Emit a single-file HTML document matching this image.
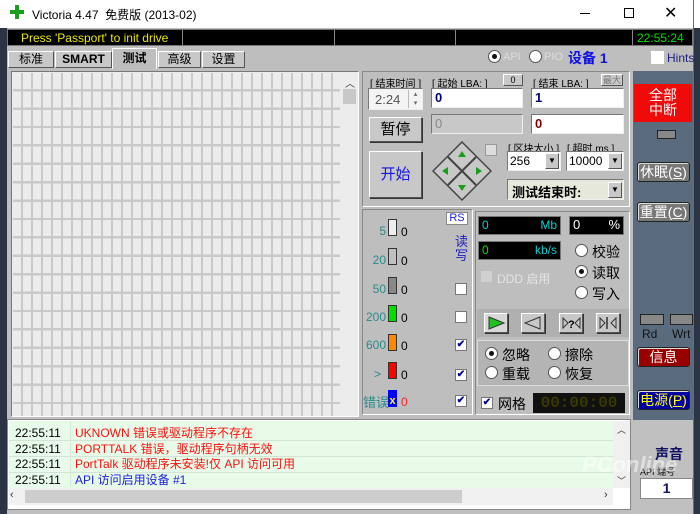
<!DOCTYPE html>
<html><head><meta charset="utf-8"><style>
*{box-sizing:border-box;margin:0;padding:0}
body{width:700px;height:514px;overflow:hidden;position:relative;background:#2b3442;font-family:"Liberation Sans","Noto Sans CJK SC",sans-serif;font-size:12px}
.a{position:absolute}
.bt{background:#c8c8c8;border:1px solid #555;border-top-color:#fff;border-left-color:#fff;box-shadow:1px 1px 0 #333}
.in{background:#fff;border:1px solid #777;border-right-color:#eee;border-bottom-color:#eee}
.lbl{color:#000;font-size:10px}
.rad{position:absolute;width:13px;height:13px;border-radius:50%;background:#fff;border:1px solid #555}
.rad.on::after{content:"";position:absolute;left:3px;top:3px;width:5px;height:5px;border-radius:50%;background:#111}
.cb{position:absolute;width:12px;height:12px;background:#fff;border:1px solid #777;font-size:10px;line-height:10px;text-align:center;color:#00008b;font-weight:bold}
.rbtn{position:absolute;left:637px;width:53px;height:20px;border:1px solid #222;border-radius:3px;color:#fff;font-size:14px;text-align:center;line-height:18px;box-shadow:inset 1px 1px 0 #ddd}
.tab{position:absolute;top:51px;height:17px;background:#c8c8c8;border:1px solid #555;border-top-color:#fff;border-left-color:#fff;font-size:12px;line-height:15px;text-align:center;white-space:nowrap;overflow:hidden}
</style></head><body>
<div class="a" style="left:0;top:0;width:700px;height:28px;background:#fff"></div>
<div class="a" style="left:15px;top:5px;width:4px;height:14px;background:#1a9e1a"></div>
<div class="a" style="left:10px;top:10px;width:14px;height:4px;background:#1a9e1a"></div>
<div class="a" style="left:32px;top:6px;font-size:12px;color:#000">Victoria 4.47&nbsp; 免费版 (2013-02)</div>
<div class="a" style="left:580px;top:13px;width:10px;height:1px;background:#000"></div>
<div class="a" style="left:624px;top:8px;width:10px;height:10px;border:1px solid #000"></div>
<div class="a" style="left:664px;top:3px;font-size:16px;color:#000">✕</div>
<div class="a" style="left:693px;top:0;width:1px;height:514px;background:#1e7fd6"></div>
<div class="a" style="left:7px;top:28px;width:686px;height:486px;background:#bebebe"></div>
<div class="a" style="left:7px;top:29px;width:686px;height:17px;background:#000;border:1px solid #777"></div>
<div class="a" style="left:182px;top:30px;width:1px;height:15px;background:#888"></div>
<div class="a" style="left:334px;top:30px;width:1px;height:15px;background:#888"></div>
<div class="a" style="left:455px;top:30px;width:1px;height:15px;background:#888"></div>
<div class="a" style="left:632px;top:30px;width:1px;height:15px;background:#888"></div>
<div class="a" style="left:21px;top:31px;color:#e8e800;font-size:12px">Press 'Passport' to init drive</div>
<div class="a" style="left:637px;top:31px;color:#00e000;font-size:12px">22:55:24</div>
<div class="tab" style="left:8px;width:46px">标准</div>
<div class="tab" style="left:55px;width:57px;font-weight:bold">SMART</div>
<div class="a" style="left:112px;top:48px;width:45px;height:21px;background:#bebebe;border:1px solid #fff;border-bottom:none;font-weight:bold;text-align:center;line-height:18px">测试</div>
<div class="tab" style="left:158px;width:43px">高级</div>
<div class="tab" style="left:202px;width:43px">设置</div>
<div class="rad on" style="left:488px;top:50px"></div>
<div class="a" style="left:503px;top:51px;color:#ddd;font-size:11px">API</div>
<div class="rad" style="left:529px;top:50px"></div>
<div class="a" style="left:544px;top:51px;color:#ddd;font-size:11px">PIO</div>
<div class="a" style="left:568px;top:48px;color:#1010e0;font-size:14px;font-weight:bold">设备 1</div>
<div class="a" style="left:651px;top:51px;width:13px;height:13px;background:#fff"></div>
<div class="a" style="left:667px;top:51px;color:#202080;font-size:12px">Hints</div>
<div class="a" style="left:11px;top:71px;width:348px;height:346px;border:1px solid #777;border-right-color:#fff;border-bottom-color:#fff;background:#ececec"></div>
<div class="a" style="left:13px;top:73px;width:327px;height:343px;background-color:#ececec;background-image:repeating-linear-gradient(90deg,transparent 0,transparent 8px,#c9c9c9 8px,#c9c9c9 10px),repeating-linear-gradient(180deg,transparent 0,transparent 16px,#c9c9c9 16px,#c9c9c9 18.4px)"></div>
<div class="a" style="left:341px;top:73px;width:17px;height:343px;background:#ececec"></div>
<div class="a" style="left:345px;top:75px;font-size:10px;color:#333">︿</div>
<div class="a" style="left:343px;top:89px;width:13px;height:15px;background:#c8c8c8"></div>
<div class="a" style="left:362px;top:71px;width:268px;height:136px;border:1px solid #888;border-right-color:#fff;border-bottom-color:#fff"></div>
<div class="a lbl" style="left:370px;top:75px">[ 结束时间 ]</div>
<div class="a lbl" style="left:432px;top:75px">[ 起始 LBA: ]</div>
<div class="a bt" style="left:503px;top:74px;width:20px;height:12px;font-size:9px;text-align:center;line-height:10px;box-shadow:none">0</div>
<div class="a lbl" style="left:533px;top:75px">[ 结束 LBA: ]</div>
<div class="a bt" style="left:601px;top:74px;width:22px;height:12px;font-size:9px;text-align:center;line-height:10px;box-shadow:none;color:#777">最大</div>
<div class="a in" style="left:368px;top:88px;width:55px;height:22px;background:#f4f4f4;color:#555;font-size:13px;padding:3px 6px">2:24</div>
<div class="a" style="left:408px;top:90px;width:14px;height:18px;border-left:1px solid #bbb;font-size:7px;color:#666;line-height:9px;text-align:center">▴<br>▾</div>
<div class="a in" style="left:431px;top:88px;width:92px;height:20px;color:#000080;font-weight:bold;font-size:13px;padding:1px 3px">0</div>
<div class="a in" style="left:531px;top:88px;width:93px;height:20px;color:#000080;font-weight:bold;font-size:13px;padding:1px 3px">1</div>
<div class="a bt" style="left:369px;top:117px;width:53px;height:25px;font-size:15px;text-align:center;line-height:23px">暂停</div>
<div class="a in" style="left:431px;top:114px;width:92px;height:20px;background:#c8c8c8;color:#888;font-size:13px;padding:1px 3px">0</div>
<div class="a in" style="left:531px;top:114px;width:93px;height:20px;color:#800000;font-weight:bold;font-size:13px;padding:1px 3px">0</div>
<div class="a bt" style="left:369px;top:151px;width:53px;height:47px;font-size:15px;text-align:center;line-height:45px;color:#1515e0">开始</div>
<svg class="a" style="left:432px;top:141px" width="60" height="60" viewBox="0 0 60 60">
<polygon points="30,1 59,30 30,59 1,30" fill="#c8c8c8" stroke="#444" stroke-width="1.5"/>
<line x1="16" y1="16" x2="44" y2="44" stroke="#444" stroke-width="2"/><line x1="44" y1="16" x2="16" y2="44" stroke="#444" stroke-width="2"/>
<polygon points="30,10 26,16 34,16" fill="#1a9e1a"/><polygon points="30,50 26,44 34,44" fill="#1a9e1a"/>
<polygon points="10,30 16,26 16,34" fill="#1a9e1a"/><polygon points="50,30 44,26 44,34" fill="#1a9e1a"/></svg>
<div class="a" style="left:485px;top:144px;width:12px;height:12px;background:#ddd;border:1px solid #999"></div>
<div class="a lbl" style="left:508px;top:140px">[ 区块大小 ]</div>
<div class="a lbl" style="left:567px;top:140px">[ 超时 ms ]</div>
<div class="a in" style="left:507px;top:151px;width:54px;height:20px;font-size:12px;padding:2px 2px">256</div>
<div class="a bt" style="left:545px;top:153px;width:14px;height:16px;box-shadow:none;font-size:8px;text-align:center;line-height:14px">▼</div>
<div class="a in" style="left:566px;top:151px;width:58px;height:20px;font-size:12px;padding:2px 2px">10000</div>
<div class="a bt" style="left:608px;top:153px;width:14px;height:16px;box-shadow:none;font-size:8px;text-align:center;line-height:14px">▼</div>
<div class="a in" style="left:507px;top:179px;width:117px;height:21px;background:#e6e8dc;font-size:13px;font-weight:bold;padding:2px 4px">测试结束时:</div>
<div class="a bt" style="left:608px;top:182px;width:14px;height:16px;box-shadow:none;font-size:8px;text-align:center;line-height:14px">▼</div>
<div class="a" style="left:362px;top:209px;width:111px;height:206px;border:1px solid #888;border-right-color:#fff;border-bottom-color:#fff"></div>
<div class="a" style="left:446px;top:212px;width:22px;height:13px;background:#fff;border:1px solid #888;color:#2020e0;font-size:11px;line-height:11px;text-align:center">RS</div>
<div class="a" style="left:455px;top:235px;width:14px;color:#2020c0;font-size:13px;line-height:14px">读写</div>
<div class="a" style="left:362px;top:224px;width:24px;text-align:right;color:#2a8a8a;font-size:12px">5</div>
<div class="a" style="left:362px;top:253px;width:24px;text-align:right;color:#2a8a8a;font-size:12px">20</div>
<div class="a" style="left:362px;top:282px;width:24px;text-align:right;color:#2a8a8a;font-size:12px">50</div>
<div class="a" style="left:362px;top:310px;width:24px;text-align:right;color:#2a8a8a;font-size:12px">200</div>
<div class="a" style="left:362px;top:338px;width:24px;text-align:right;color:#2a8a8a;font-size:12px">600</div>
<div class="a" style="left:362px;top:367px;width:19px;text-align:right;color:#2a8a8a;font-size:12px">&gt;</div>
<div class="a" style="left:363px;top:392px;color:#2a8a8a;font-size:13px">错误</div>
<div class="a" style="left:388px;top:219px;width:9px;height:17px;background:#eee;border:1px solid #333"></div>
<div class="a" style="left:388px;top:248px;width:9px;height:17px;background:#c0c0c0;border:1px solid #333"></div>
<div class="a" style="left:388px;top:277px;width:9px;height:17px;background:#888;border:1px solid #333"></div>
<div class="a" style="left:388px;top:305px;width:9px;height:17px;background:#00e000;border:1px solid #333"></div>
<div class="a" style="left:388px;top:334px;width:9px;height:17px;background:#ff8800;border:1px solid #333"></div>
<div class="a" style="left:388px;top:362px;width:9px;height:17px;background:#ff0000;border:1px solid #333"></div>
<div class="a" style="left:388px;top:390px;width:9px;height:17px;background:#0000ff;color:#ffff00;font-size:11px;font-weight:bold;line-height:22px;text-align:center">x</div>
<div class="a" style="left:401px;top:225px;font-size:12px">0</div>
<div class="a" style="left:401px;top:254px;font-size:12px">0</div>
<div class="a" style="left:401px;top:283px;font-size:12px">0</div>
<div class="a" style="left:401px;top:311px;font-size:12px">0</div>
<div class="a" style="left:401px;top:339px;font-size:12px">0</div>
<div class="a" style="left:401px;top:368px;font-size:12px">0</div>
<div class="a" style="left:401px;top:395px;font-size:12px;color:#ff2020">0</div>
<div class="cb" style="left:455px;top:283px"></div>
<div class="cb" style="left:455px;top:311px"></div>
<div class="cb" style="left:455px;top:339px">✔</div>
<div class="cb" style="left:455px;top:369px">✔</div>
<div class="cb" style="left:455px;top:395px">✔</div>
<div class="a" style="left:475px;top:211px;width:155px;height:204px;border:1px solid #888;border-right-color:#fff;border-bottom-color:#fff"></div>
<div class="a" style="left:478px;top:216px;width:83px;height:19px;background:#000;border:1px solid #777;color:#00d0d0;font-size:12px;padding:1px 3px">0<span style="float:right">Mb</span></div>
<div class="a" style="left:569px;top:216px;width:55px;height:19px;background:#000;border:1px solid #777;color:#fff;font-size:13px;padding:0 3px">0<span style="float:right">%</span></div>
<div class="a" style="left:478px;top:241px;width:83px;height:19px;background:#000;border:1px solid #777;font-size:12px;padding:1px 3px"><span style="color:#00e000">0</span><span style="float:right;color:#00d0d0">kb/s</span></div>
<div class="rad" style="left:575px;top:244px"></div><div class="a" style="left:592px;top:242px;font-size:14px">校验</div>
<div class="rad on" style="left:575px;top:265px"></div><div class="a" style="left:592px;top:263px;font-size:14px">读取</div>
<div class="rad" style="left:575px;top:286px"></div><div class="a" style="left:592px;top:284px;font-size:14px">写入</div>
<div class="a" style="left:481px;top:271px;width:11px;height:11px;background:#d0d0d0"></div>
<div class="a" style="left:497px;top:270px;color:#e4e4e4;font-size:12px">DDD 启用</div>
<div class="a" style="left:477px;top:309px;width:152px;height:28px;background:#b0b0b0"></div>
<div class="a bt" style="left:484px;top:313px;width:24px;height:20px;background:#d8d8d8"><svg width="22" height="18"><polygon points="4,3 19,9 4,15" fill="#20c020" stroke="#333"/></svg></div>
<div class="a bt" style="left:521px;top:313px;width:24px;height:20px"><svg width="22" height="18"><polygon points="18,3 3,9 18,15" fill="none" stroke="#333"/></svg></div>
<div class="a bt" style="left:559px;top:313px;width:24px;height:20px"><svg width="22" height="18"><polygon points="3,4 8,9 3,14" fill="none" stroke="#333"/><text x="8" y="14" font-size="11" font-weight="bold" font-family="Liberation Sans">?</text><polygon points="20,4 15,9 20,14" fill="none" stroke="#333"/></svg></div>
<div class="a bt" style="left:596px;top:313px;width:24px;height:20px"><svg width="22" height="18"><polygon points="3,4 8,9 3,14" fill="none" stroke="#333"/><line x1="10" y1="3" x2="10" y2="15" stroke="#333" stroke-width="1.5"/><polygon points="19,4 14,9 19,14" fill="none" stroke="#333"/></svg></div>
<div class="a" style="left:477px;top:340px;width:152px;height:46px;background:#b4b4b4;border:1px solid #ddd"></div>
<div class="rad on" style="left:485px;top:347px"></div><div class="a" style="left:502px;top:345px;font-size:14px">忽略</div>
<div class="rad" style="left:548px;top:347px"></div><div class="a" style="left:565px;top:345px;font-size:14px">擦除</div>
<div class="rad" style="left:485px;top:366px"></div><div class="a" style="left:502px;top:364px;font-size:14px">重载</div>
<div class="rad" style="left:548px;top:366px"></div><div class="a" style="left:565px;top:364px;font-size:14px">恢复</div>
<div class="cb" style="left:481px;top:397px">✔</div>
<div class="a" style="left:498px;top:394px;font-size:14px">网格</div>
<div class="a" style="left:533px;top:393px;width:92px;height:20px;background:#111;color:#3a3a00;font-family:'Liberation Mono',monospace;font-size:16px;font-weight:bold;line-height:20px;text-align:center">00:00:00</div>
<div class="a" style="left:633px;top:71px;width:60px;height:443px;background:#5b6b7e"></div>
<div class="a" style="left:634px;top:84px;width:58px;height:38px;background:#f00a0a;color:#fff;font-size:14px;line-height:15px;text-align:center;padding-top:4px">全部<br>中断</div>
<div class="a" style="left:657px;top:130px;width:19px;height:9px;background:#888;border:1px solid #222"></div>
<div class="rbtn" style="top:162px;background:#787878">休眠(<u>S</u>)</div>
<div class="rbtn" style="top:202px;background:#787878">重置(<u>C</u>)</div>
<div class="a" style="left:640px;top:314px;width:24px;height:11px;background:#888;border:1px solid #222"></div>
<div class="a" style="left:670px;top:314px;width:23px;height:11px;background:#888;border:1px solid #222"></div>
<div class="a" style="left:642px;top:327px;font-size:12px;color:#111">Rd</div>
<div class="a" style="left:672px;top:327px;font-size:12px;color:#111">Wrt</div>
<div class="rbtn" style="top:347px;background:#900;">信息</div>
<div class="rbtn" style="top:390px;background:#0000a0;color:#ff0">电源(<u>P</u>)</div>
<div class="a" style="left:633px;top:420px;width:60px;height:94px;background:#c0c0c0"></div>
<div class="a" style="left:655px;top:444px;font-size:14px;font-weight:bold;color:#101060">声音</div>
<div class="a" style="left:640px;top:465px;font-size:9px;color:#111">API 端号</div>
<div class="a" style="left:640px;top:478px;width:53px;height:21px;background:#fff;border:1px solid #888;text-align:center;font-weight:bold;color:#101060;font-size:14px;line-height:19px">1</div>
<div class="a" style="left:7px;top:419px;width:624px;height:91px;background:#fff;border:1px solid #888"></div>
<div class="a" style="left:9px;top:421px;width:604px;height:84px;background:#e8fbe8"></div>
<div class="a" style="left:70px;top:421px;width:1px;height:66px;background:#d8e8d8"></div>
<div class="a" style="left:9px;top:440px;width:604px;height:1px;background:#d4e4d4"></div>
<div class="a" style="left:9px;top:456px;width:604px;height:1px;background:#d4e4d4"></div>
<div class="a" style="left:9px;top:472px;width:604px;height:1px;background:#d4e4d4"></div>
<div class="a" style="left:15px;top:426px;font-size:12px;line-height:15.7px;color:#000">22:55:11<br>22:55:11<br>22:55:11<br>22:55:11</div>
<div class="a" style="left:75px;top:426px;font-size:12px;line-height:15.7px;color:#ff1010">UKNOWN 错误或驱动程序不存在<br>PORTTALK 错误，驱动程序句柄无效<br>PortTalk 驱动程序未安装!仅 API 访问可用<br><span style="color:#2020e0">API 访问启用设备 #1</span></div>
<div class="a" style="left:9px;top:488px;width:604px;height:17px;background:#f0f0f0"></div>
<div class="a" style="left:25px;top:490px;width:437px;height:13px;background:#cdcdcd"></div>
<div class="a" style="left:10px;top:489px;font-size:11px;color:#333">‹</div>
<div class="a" style="left:604px;top:489px;font-size:11px;color:#333">›</div>
<div class="a" style="left:613px;top:421px;width:17px;height:67px;background:#f0f0f0"></div>
<div class="a" style="left:617px;top:423px;font-size:9px;color:#333">︿</div>
<div class="a" style="left:617px;top:474px;font-size:9px;color:#333">﹀</div>
<div class="a" style="left:582px;top:452px;font-size:22px;color:rgba(255,255,255,.5);font-weight:bold;font-style:italic">PConline</div>
</body></html>
